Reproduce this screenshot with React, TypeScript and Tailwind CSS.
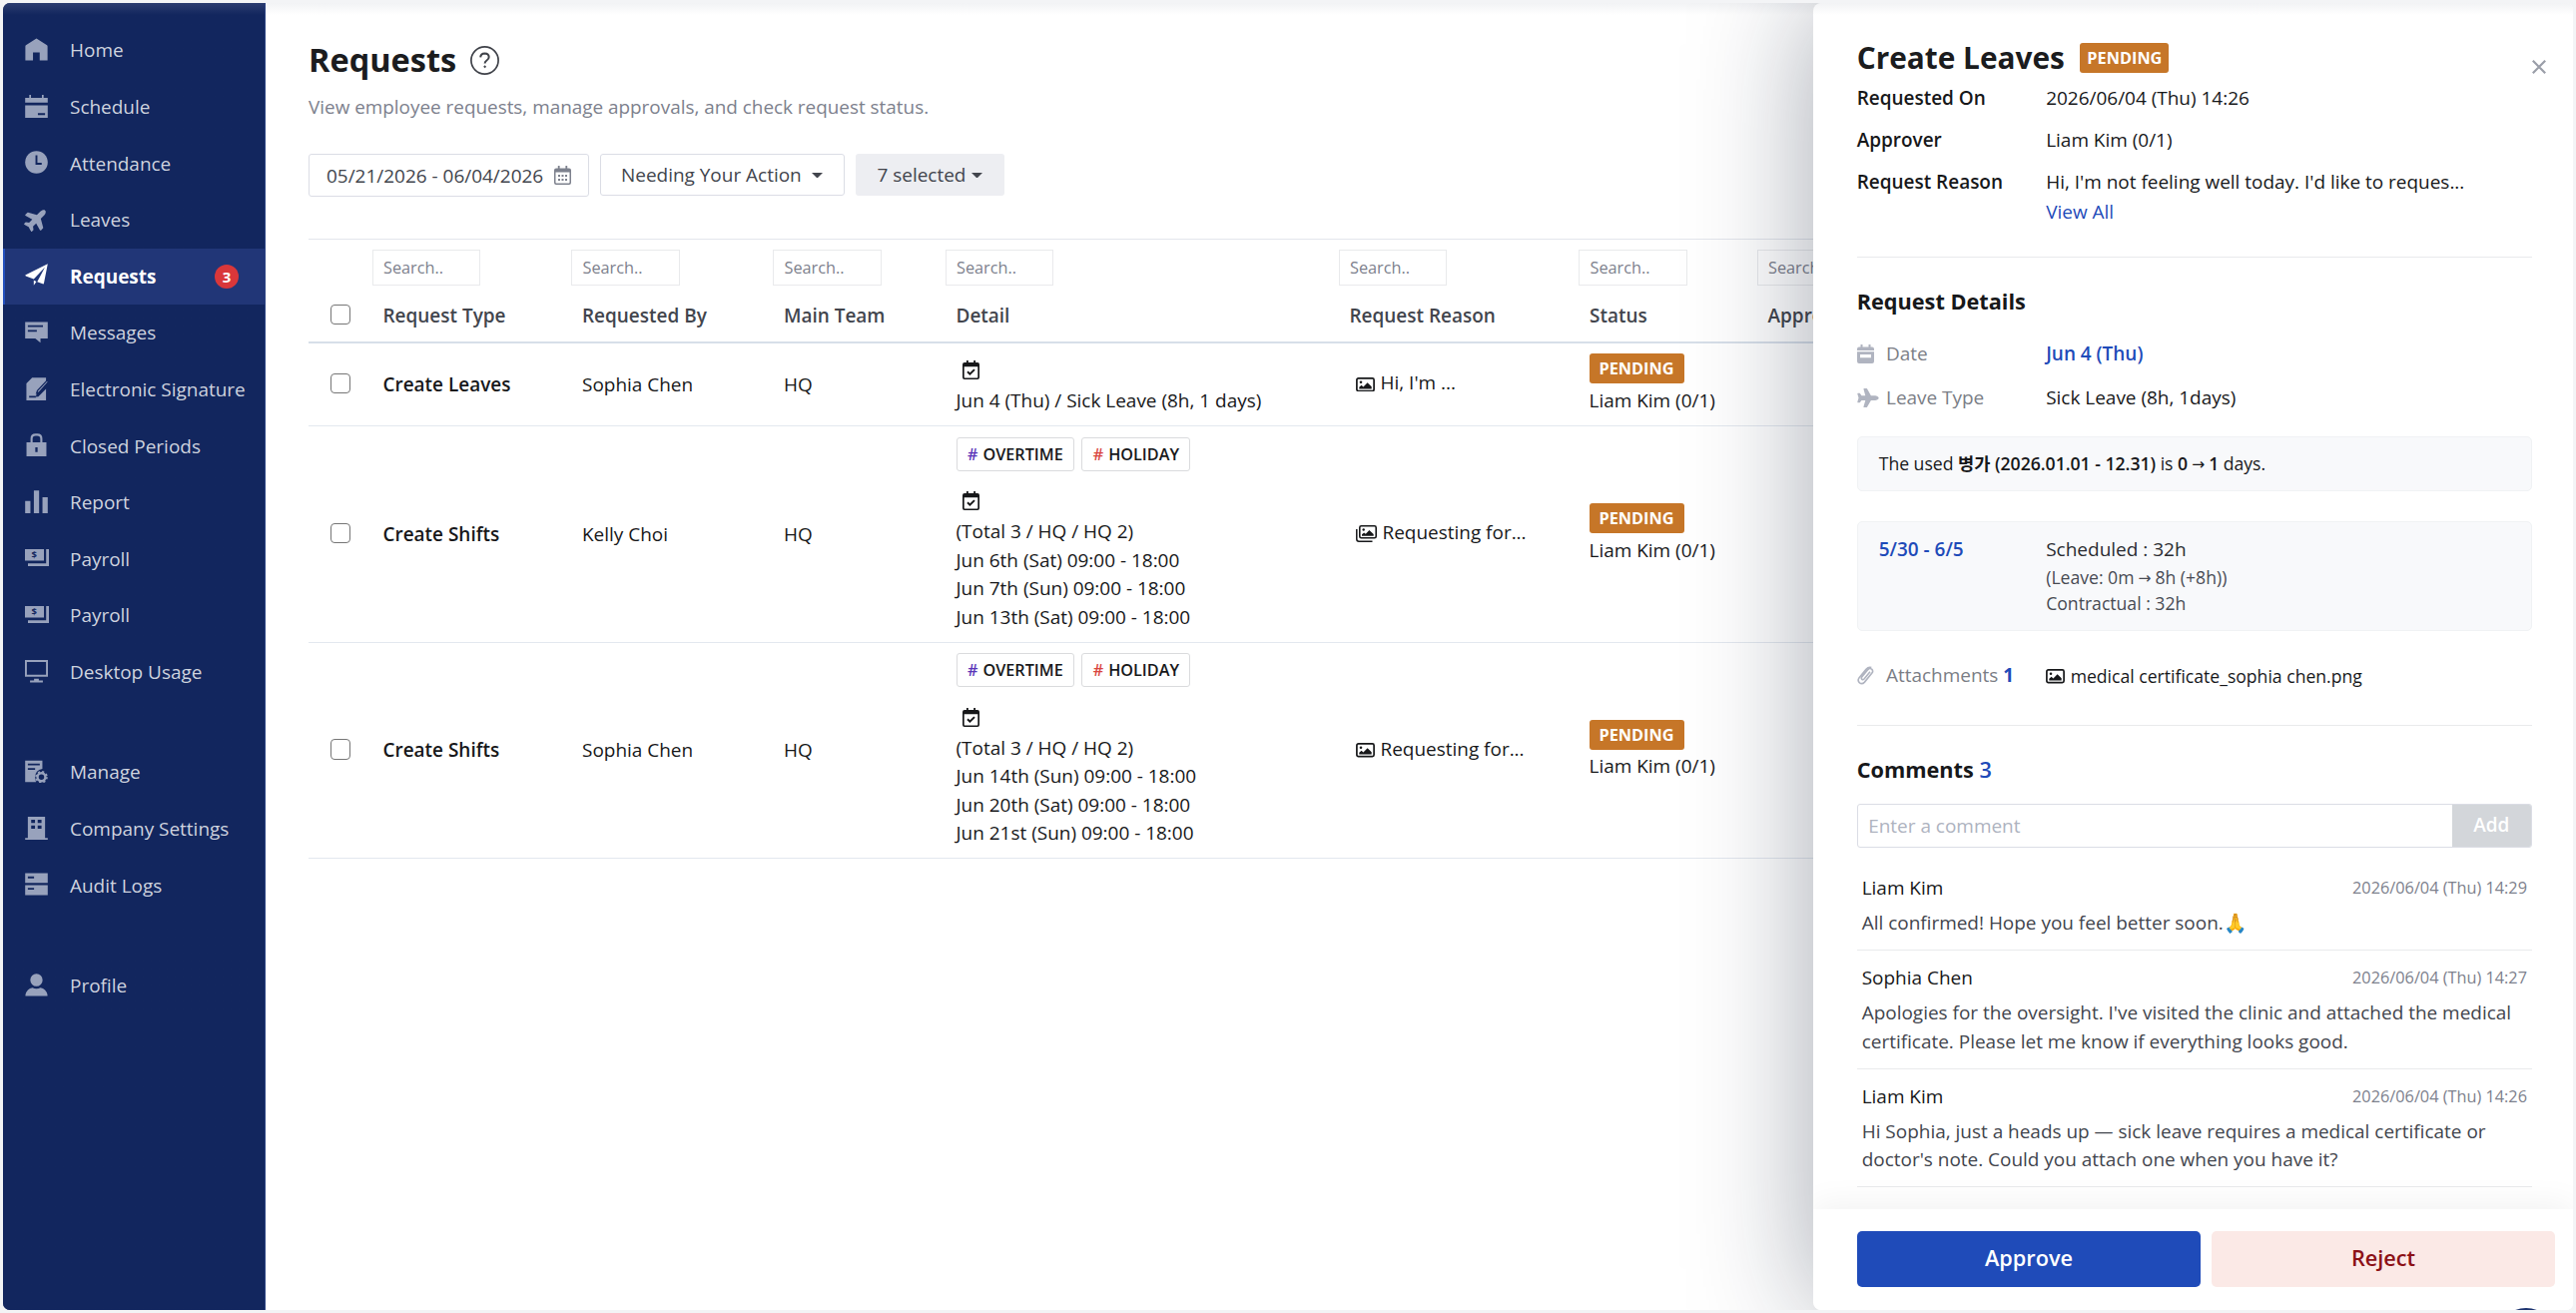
import type { ReactNode } from "react";
import { FaPlane } from "react-icons/fa";

type P = { children: ReactNode; className?: string; box?: string };

function Glyph({ children, className = "size-[23px]", box = "0 0 24 24" }: P) {
  return (
    <svg viewBox={box} className={`${className} shrink-0`} fill="currentColor">
      {children}
    </svg>
  );
}

const NAVY = "#12265e";

const icons: Record<string, ReactNode> = {
  home: (
    <Glyph>
      <path d="M12 .5 23 7.600q.6.400.6 1.200V23.500h-8.200V15H8.400v8.500H.400V8.800q0-.8.6-1.200z" />
    </Glyph>
  ),
  schedule: (
    <Glyph>
      <path d="M4.500 0h1.800v3h11.400V0h1.800v3h4.300v5.200H.2V3h4.300z" />
      <path fillRule="evenodd" d="M.2 11h23.600v13H.2zM13.500 19v2H21v-2z" />
    </Glyph>
  ),
  clock: (
    <Glyph>
      <circle cx="12" cy="12" r="11.800" />
      <path d="M12 4.800v8.700h5.500" stroke={NAVY} strokeWidth="2" fill="none" />
    </Glyph>
  ),
  plane: <FaPlane className="size-[25px] shrink-0 -rotate-45 -mx-px" />,
  send: (
    <Glyph>
      <path d="M23.800.3 19.800 20.500q-.3 1.100-1.300.7L12.800 19l8-15.200L9.200 16.200.9 13q-1.100-.6-.1-1.300zM9.200 17.400l2.800 1.500-2.800 3.700z" />
    </Glyph>
  ),
  message: (
    <Glyph>
      <path fillRule="evenodd" d="M.2 1.500h23.600v17.300h-7.600v4.400l-5.400-4.400H.2zM3 5v1.900h15.800V5zm0 4.900v1.900h9.400V9.900z" />
    </Glyph>
  ),
  sign: (
    <Glyph>
      <path d="M7.500.2H22v7.200L12 17.500l-.6 2.800L14 20l8-8v12H1.500V6.200z" />
      <path d="m23 3.200 1.500 1.500-9.700 10.800-2.600 1 .8-2.700z" stroke={NAVY} strokeWidth="1.300" />
      <path d="M4.400 19.300h7v1.800h-7z" fill={NAVY} />
    </Glyph>
  ),
  lock: (
    <Glyph>
      <path fillRule="evenodd" d="M1.600 9.300h4.200V5.500Q5.800.3 11 .3h2q5.200 0 5.200 5.200v3.800h4.200V24H1.600zm6.400 0h8V5.700q0-3.200-3.200-3.200h-1.600Q8 2.500 8 5.700zm2.800 5.300v5h2.400v-5z" />
    </Glyph>
  ),
  report: (
    <Glyph>
      <path d="M.2 11.300h5.500V24H.2zM9.300.2h5.500V24H9.300zM18.300 7.300h5.500V24h-5.500z" />
    </Glyph>
  ),
  payroll: (
    <Glyph className="w-[24px] h-[17px]" box="0 0 24 17">
      <path d="M0 0h19v11.500H0zM21.200 0H24v17H3v-2.700h18.200z" />
      <text x="9.100" y="9.100" fontSize="9.500" fontWeight="700" textAnchor="middle" fill={NAVY}>$</text>
    </Glyph>
  ),
  desktop: (
    <Glyph>
      <path fillRule="evenodd" d="M0 0h24v17.600H0zm2 2v13.500h20V2zM9.500 19.500h5v1.900h4.200v2.200H5.300v-2.200h4.200z" />
    </Glyph>
  ),
  manage: (
    <Glyph>
      <path fillRule="evenodd" d="M.2.8h18v8.700q-8 1.500-7.500 9.300l.8 4.400H.2zM3 4v1.800h12.500V4zm0 4.700v1.800h7.600V8.700z" />
      <circle cx="17.200" cy="18" r="4.100" fill="none" stroke="currentColor" strokeWidth="2.500" />
      <circle cx="17.200" cy="18" r="5.700" fill="none" stroke="currentColor" strokeWidth="1.700" strokeDasharray="2.240 2.240" />
    </Glyph>
  ),
  company: (
    <Glyph>
      <path fillRule="evenodd" d="M3 0h18v22.200h2.800V24H.2v-1.800H3zm3.500 3v3.400h4V3zm6.800 0v3.400h4V3zM6.500 9v3.400h4V9zm6.800 0v3.400h4V9z" />
    </Glyph>
  ),
  audit: (
    <Glyph>
      <path fillRule="evenodd" d="M.2.5h23.600v10.300H.2zM3 4v1.900h6.500V4zM.2 13h23.600v10.400H.2zM3 15.800v1.900h6.500v-1.900z" />
    </Glyph>
  ),
  profile: (
    <Glyph>
      <ellipse cx="12" cy="6.800" rx="6.400" ry="6.600" />
      <path d="M.5 23.500v-1.300q1.500-6.200 7.300-7.300Q12 17 16.200 14.900q5.800 1.100 7.300 7.300v1.300z" />
    </Glyph>
  ),
};

const nav: [string, string][][] = [
  [
    ["home", "Home"],
    ["schedule", "Schedule"],
    ["clock", "Attendance"],
    ["plane", "Leaves"],
    ["send", "Requests"],
    ["message", "Messages"],
    ["sign", "Electronic Signature"],
    ["lock", "Closed Periods"],
    ["report", "Report"],
    ["payroll", "Payroll"],
    ["payroll", "Payroll"],
    ["desktop", "Desktop Usage"],
  ],
  [
    ["manage", "Manage"],
    ["company", "Company Settings"],
    ["audit", "Audit Logs"],
  ],
  [["profile", "Profile"]],
];

function Sidebar() {
  return (
    <nav className="flex w-[263px] shrink-0 flex-col gap-[43.900px] border-r border-[#2c4383] bg-[#12265e] bg-linear-to-b from-[#2b3c70] to-[#12265e] to-[12px] pt-[19.300px]">
      {nav.map((group, g) => (
        <div key={g}>
          {group.map(([icon, label], i) => {
            const active = label === "Requests";
            return (
              <div
                key={i}
                className={
                  active
                    ? "flex h-[56.600px] items-center border-l-2 border-[#2450bd] bg-[#213677] pl-5 font-bold text-white"
                    : "flex h-[56.600px] items-center pl-[22px] text-[#ced3df]"
                }
              >
                <span className={active ? "mb-[2px] flex w-[45px]" : "mb-[2px] flex w-[45px] text-[#98a2bc]"}>{icons[icon]}</span>
                <span className="whitespace-nowrap">{label}</span>
                {active && (
                  <span className="mr-[26px] ml-auto flex size-6 items-center justify-center rounded-full bg-[#d9373a] text-[15px] font-bold">3</span>
                )}
              </div>
            );
          })}
        </div>
      ))}
    </nav>
  );
}

function Caret() {
  return (
    <svg viewBox="0 0 10 5" className="h-[5.500px] w-[11px]" fill="currentColor">
      <path d="M0 0h10L5 5z" />
    </svg>
  );
}

function CalendarCheck() {
  return (
    <Glyph className="h-[19px] w-[17px]" box="0 0 17 19">
      <path d="M4 0h1.800v2h5.400V0H13v2h2q2 0 2 2v13q0 2-2 2H2q-2 0-2-2V4q0-2 2-2h2zM1.700 6.300V16.800q0 .6.6.6h12.400q.6 0 .6-.6V6.300z" fillRule="evenodd" />
      <path d="m5 11.300 2.400 2.300 4.600-4.500" stroke="currentColor" strokeWidth="2" fill="none" />
    </Glyph>
  );
}

function ImageIcon() {
  return (
    <Glyph className="h-[14.600px] w-[19px]" box="0 0 19 14.600">
      <rect x=".9" y=".9" width="17.200" height="12.800" rx="1.600" fill="none" stroke="currentColor" strokeWidth="1.700" />
      <circle cx="5" cy="4.800" r="1.300" />
      <path d="M3.300 11.500V9.800l2.300-2 1.800 1.600 4.200-4.200 4.100 4.100v2.200z" />
    </Glyph>
  );
}

function ImagesIcon() {
  return (
    <Glyph className="h-[17px] w-[21px]" box="0 0 21 17">
      <rect x="3.800" y=".8" width="16.400" height="12" rx="1.600" fill="none" stroke="currentColor" strokeWidth="1.600" />
      <circle cx="7.700" cy="4.500" r="1.200" />
      <path d="M6 10.700V9.300l2.100-1.800 1.700 1.300 3.600-3.900 4.300 4v1.800z" />
      <path d="M.8 4v10q0 2.200 2.200 2.200h13.500" fill="none" stroke="currentColor" strokeWidth="1.500" />
    </Glyph>
  );
}

const COLS = "grid grid-cols-[63.500px_199.500px_202px_172.500px_394px_240.500px_178.500px_200px]";
const heads = ["Request Type", "Requested By", "Main Team", "Detail", "Request Reason", "Status", "Approver"];

type Row = { type: string; by: string; reason: string; multi?: boolean; lines: string[]; tags?: boolean };
const rows: Row[] = [
  { type: "Create Leaves", by: "Sophia Chen", reason: "Hi, I'm ...", lines: ["Jun 4 (Thu) / Sick Leave (8h, 1 days)"] },
  {
    type: "Create Shifts",
    by: "Kelly Choi",
    reason: "Requesting for...",
    multi: true,
    tags: true,
    lines: ["(Total 3 / HQ / HQ 2)", "Jun 6th (Sat) 09:00 - 18:00", "Jun 7th (Sun) 09:00 - 18:00", "Jun 13th (Sat) 09:00 - 18:00"],
  },
  {
    type: "Create Shifts",
    by: "Sophia Chen",
    reason: "Requesting for...",
    tags: true,
    lines: ["(Total 3 / HQ / HQ 2)", "Jun 14th (Sun) 09:00 - 18:00", "Jun 20th (Sat) 09:00 - 18:00", "Jun 21st (Sun) 09:00 - 18:00"],
  },
];

function Checkbox() {
  return <span className="-mt-[2px] ml-[21.500px] block size-[20.500px] rounded-[4px] border-[1.500px] border-[#767676] bg-white" />;
}

function Tag({ label, color }: { label: string; color: string }) {
  return (
    <span className="flex h-[34px] items-center gap-[5px] rounded-[3px] border border-[#dadbdd] px-[10.500px] text-[16.200px] font-semibold">
      <span className={color}>#</span>
      {label}
    </span>
  );
}

function Main() {
  return (
    <main className="flex-1 overflow-hidden bg-white bg-linear-to-b from-[#f2f3f5] to-white to-[12px] pl-[43px]">
      <header className="mt-[36px] flex h-[42px] items-center gap-[14px]">
        <h1 className="text-[32.500px] leading-none font-bold text-[#1b1c1e]">Requests</h1>
        <svg viewBox="0 0 29 29" className="mt-px size-[29px]" fill="none" stroke="#3f4249">
          <circle cx="14.500" cy="14.500" r="13.600" strokeWidth="1.700" />
          <path d="M10.200 11.300q.3-3.900 4.300-3.900 4.100.1 4.200 3.700 0 2.100-2.200 3.400-1.900 1.200-1.900 2.900" strokeWidth="2" />
          <circle cx="14.600" cy="20.800" r=".8" fill="#3f4249" strokeWidth="1" />
        </svg>
      </header>
      <p className="mt-[9px] text-[18.900px] leading-[34px] text-[#7d818d]">View employee requests, manage approvals, and check request status.</p>
      <div className="mt-[30.300px] flex gap-[11px] text-[#42454d]">
        <div className="flex h-[43px] w-[280.500px] items-center justify-between rounded-[3px] border border-[#dbdde5] px-[17px]">
          05/21/2026 - 06/04/2026
          <svg viewBox="0 0 17 19" className="h-[19px] w-[17px]" fill="#7d818d">
            <path fillRule="evenodd" d="M3.800 0h1.800v2.500h5.800V0h1.800v2.500H15q2 0 2 2V17q0 2-2 2H2q-2 0-2-2V4.500q0-2 2-2h1.800zM1.500 6.500v10.300q0 .7.7.7h12.600q.7 0 .7-.7V6.500z" />
            <path d="M4 9h2v2H4zm3.500 0h2v2h-2zM11 9h2v2h-2zm-7 4h2v2H4zm3.500 0h2v2h-2zm3.500 0h2v2h-2z" />
          </svg>
        </div>
        <div className="flex h-[42px] w-[245px] items-center justify-between rounded-[3px] border border-[#dbdde5] pr-[21px] pl-[20.500px]">
          Needing Your Action
          <Caret />
        </div>
        <div className="flex h-[42px] w-[149px] items-center justify-between rounded-[3px] bg-[#edeef2] px-[22px]">
          7 selected
          <Caret />
        </div>
      </div>
      <div className="mt-[42px] w-[1650px] border-t border-[#e3e6ec]">
        <div className={`${COLS} h-[45.500px] items-end`}>
          <span />
          {heads.map((h) => (
            <span key={h} className="flex h-[35.500px] w-[108.500px] items-center border border-[#e9eaec] bg-white pt-px pl-[10.500px] text-[16.300px] text-[#7d818d]">
              Search..
            </span>
          ))}
        </div>
        <div className={`${COLS} h-[58px] items-center border-b-2 border-[#d7dfe9] pt-[4px] font-semibold text-[#42454d]`}>
          <Checkbox />
          {heads.map((h) => (
            <span key={h} className="pl-[11px]">
              {h}
            </span>
          ))}
        </div>
        {rows.map((r, i) => (
          <div key={i} className={`${COLS} items-center border-b border-[#e3e8ef] text-[#17181a]`}>
            <Checkbox />
            <span className="pl-[11px] font-semibold">{r.type}</span>
            <span className="pl-[11px]">{r.by}</span>
            <span className="pl-[11px]">HQ</span>
            <div className="pt-[10.700px] pb-[10.400px] pl-[11px]">
              {r.tags && (
                <div className="mb-[14px] flex gap-[7px]">
                  <Tag label="OVERTIME" color="text-[#5a35b8]" />
                  <Tag label="HOLIDAY" color="text-[#d9463f]" />
                </div>
              )}
              <div className="flex h-[32.600px] items-center pl-[6px]">
                <CalendarCheck />
              </div>
              {r.lines.map((l) => (
                <div key={l} className="leading-[28.500px]">
                  {l}
                </div>
              ))}
            </div>
            <span className="flex items-center gap-[6px] pb-[3px] pl-[17px]">
              <span className="mt-[3px]">{r.multi ? <ImagesIcon /> : <ImageIcon />}</span>
              {r.reason}
            </span>
            <div className="pl-[10.500px]">
              <span className="flex h-[30px] w-[95px] items-center justify-center rounded-[3px] bg-[#c67628] text-[16.300px] font-bold text-white">PENDING</span>
              <div className="mt-[2.500px] leading-[29px]">Liam Kim (0/1)</div>
            </div>
            <span />
          </div>
        ))}
      </div>
    </main>
  );
}

function Arrow() {
  return <span className="mx-[4px] inline-block -translate-y-[1.500px] font-['DejaVu_Sans'] text-[15.500px] leading-none font-normal">→</span>;
}

const comments = [
  { who: "Liam Kim", at: "2026/06/04 (Thu) 14:29", text: ["All confirmed! Hope you feel better soon.🙏"] },
  {
    who: "Sophia Chen",
    at: "2026/06/04 (Thu) 14:27",
    text: ["Apologies for the oversight. I've visited the clinic and attached the medical", "certificate. Please let me know if everything looks good."],
  },
  {
    who: "Liam Kim",
    at: "2026/06/04 (Thu) 14:26",
    text: ["Hi Sophia, just a heads up — sick leave requires a medical certificate or", "doctor's note. Could you attach one when you have it?"],
  },
];

function Drawer() {
  return (
    <aside className="absolute inset-y-0 right-0 flex w-[761px] flex-col overflow-clip rounded-l-[8px] bg-white bg-linear-to-b from-[#f2f3f5] to-white to-[12px] text-[#17181a]">
      <div className="flex-1 pr-[41px] pl-[43.700px]">
        <div className="mt-[33px] flex h-[44px] items-center">
          <h2 className="text-[29.800px] leading-none font-bold text-[#1b1c1e]">Create Leaves</h2>
          <span className="ml-[15.500px] flex h-[30px] w-[89px] items-center justify-center rounded-[3px] bg-[#c67628] text-[16.300px] font-bold text-white">PENDING</span>
          <svg viewBox="0 0 14 14" className="mt-[17px] -mr-[14px] ml-auto size-[14px]" stroke="#9a9ea8" strokeWidth="2.200">
            <path d="m.8.8 12.400 12.400M13.200.8.8 13.200" />
          </svg>
        </div>
        <dl className="grid grid-cols-[189.500px_1fr] leading-[42.200px]">
          <dt className="-mt-[3px] font-semibold">Requested On</dt>
          <dd className="-mt-[3px]">2026/06/04 (Thu) 14:26</dd>
          <dt className="font-semibold">Approver</dt>
          <dd>Liam Kim (0/1)</dd>
          <dt className="font-semibold">Request Reason</dt>
          <dd>Hi, I'm not feeling well today. I'd like to reques...</dd>
        </dl>
        <div className="-mt-[6px] pl-[189.500px] leading-[29px] text-[#1f4bb9]">View All</div>
        <hr className="mt-[30.500px] border-[#e9eaec]" />
        <h3 className="mt-[27px] text-[21.700px] leading-[33px] font-bold">Request Details</h3>
        <div className="mt-[14px] grid grid-cols-[29.300px_160.200px_1fr] items-center leading-[44.200px] text-[#7b7e86]">
          <Glyph className="h-[19px] w-[17px] text-[#b0b4c0]" box="0 0 17 19">
            <path d="M3.500 0h2v2.500h6V0h2v2.500H15q2 0 2 2V6H0V4.500q0-2 2-2h1.500z" />
            <path fillRule="evenodd" d="M0 7.300h17V17q0 2-2 2H2q-2 0-2-2zM3 10v3.200h11V10z" />
          </Glyph>
          <span>Date</span>
          <span className="font-semibold text-[#1f4bb9]">Jun 4 (Thu)</span>
          <FaPlane className="h-[19px] w-[22px] text-[#b0b4c0]" />
          <span>Leave Type</span>
          <span className="text-[#17181a]">Sick Leave (8h, 1days)</span>
        </div>
        <div className="mt-[16px] flex h-[55.500px] items-center rounded-[5px] border border-[#f0f2f4] bg-[#f8f9fb] pl-[21px] text-[17.600px]">
          <p>
            The used <b className="font-semibold">병가 (2026.01.01 - 12.31)</b> is <b className="font-semibold">0</b>
            <Arrow />
            <b className="font-semibold">1</b> days.
          </p>
        </div>
        <div className="mt-[29.500px] flex h-[110.500px] rounded-[5px] border border-[#f0f2f4] bg-[#f8f9fb] pt-[13px] pl-[21px]">
          <span className="w-[167.500px] leading-[29px] font-semibold text-[#1f4bb9]">5/30 - 6/5</span>
          <div className="text-[17.600px] leading-[26.500px] text-[#484b53]">
            <div className="text-[19px] leading-[29px] text-[#2a2c31]">Scheduled : 32h</div>
            <div>
              (Leave: 0m
              <Arrow />
              8h (+8h))
            </div>
            <div>Contractual : 32h</div>
          </div>
        </div>
        <div className="mt-[27px] flex h-[34px] items-center">
          <svg viewBox="0 0 17 19" className="mr-[12.300px] h-[19px] w-[17px]" fill="none" stroke="#b0b4c0" strokeWidth="1.600">
            <path d="M13 5.800 7 13q-1.100 1.200-2.200.3-1-.9-.1-2.200l6.200-7.500q1.700-1.900 3.700-.4 1.900 1.700.3 3.900l-7.400 9q-2.500 2.700-5 .8-2.400-2.200-.6-4.800L9 3.200Q11.500.4 14.300 1.500" />
          </svg>
          <span className="w-[160.200px] text-[#7b7e86]">
            Attachments <b className="font-bold text-[#1f4bb9]">1</b>
          </span>
          <span className="mt-[3px] flex items-center gap-[5.500px] text-[17.600px]">
            <ImageIcon />
            medical certificate_sophia chen.png
          </span>
        </div>
        <hr className="mt-[33px] border-[#e9eaec]" />
        <h3 className="mt-[26.500px] text-[21.700px] leading-[33px] font-bold">
          Comments <span className="font-semibold text-[#1f4bb9]">3</span>
        </h3>
        <div className="mt-[18.500px] flex h-[44px] overflow-hidden rounded-[3px] border border-[#dbdde5]">
          <span className="flex-1 pl-[10.500px] leading-[43px] text-[#aeb3bf]">Enter a comment</span>
          <span className="w-[79.500px] bg-[#d3d6da] text-center leading-[41px] font-semibold text-white">Add</span>
        </div>
        <div className="mt-[13px]">
          {comments.map((c, i) => (
            <div key={i} className="border-b border-[#e9eaec] px-[5px] pt-[13px] pb-[12.500px]">
              <div className="flex justify-between leading-[29px]">
                <span>{c.who}</span>
                <span className="text-[16.300px] text-[#7d818d]">{c.at}</span>
              </div>
              <div className="mt-[6px] leading-[28.500px] whitespace-nowrap text-[#42454d]">
                {c.text.map((t) => (
                  <div key={t}>{t}</div>
                ))}
              </div>
            </div>
          ))}
        </div>
      </div>
      <footer className="flex h-[101.500px] shrink-0 gap-[11px] bg-white pt-[22px] pr-[18px] pl-[44px] text-[21.700px] font-semibold shadow-[0_-4px_32px_rgba(0,0,0,0.060)]">
        <button className="h-[56px] flex-1 rounded-[5px] bg-[#1f4bb9] text-white">Approve</button>
        <button className="h-[56px] flex-1 rounded-[5px] bg-[#fbe9e6] text-[#8c1016]">Reject</button>
      </footer>
      <span className="absolute right-[17.500px] -bottom-[57.500px] size-[60px] rounded-full bg-[#1b326f]" />
    </aside>
  );
}

export default function App() {
  return (
    <div className="h-[1315px] w-[2580px] overflow-hidden bg-[#f3f4f6] p-[3px] font-['Open_Sans','Noto_Sans_CJK_KR',sans-serif] text-[18.970px] leading-normal">
      <div className="relative flex h-[1309px] w-[2574px] overflow-hidden rounded-[7px] bg-white">
        <Sidebar />
        <Main />
        <div className="absolute inset-y-0 right-0 w-[760.500px] rounded-l-[8px] shadow-[0_0_122px_rgba(12,24,48,0.380)]" />
        <Drawer />
      </div>
    </div>
  );
}
